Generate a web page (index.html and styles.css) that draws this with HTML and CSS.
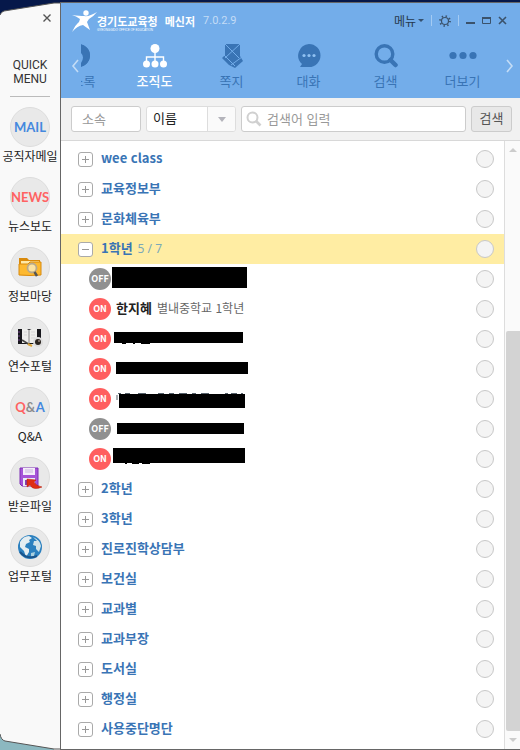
FILE: index.html
```
<!DOCTYPE html>
<html lang="ko">
<head>
<meta charset="utf-8">
<meta name="viewport" content="width=device-width, initial-scale=1">
<title>메신저</title>
<link rel="stylesheet" href="styles.css">
</head>
<body>
<div class="app">
  <aside class="side">
    <svg class="corner corner-top" width="60" height="15" aria-hidden="true"><path d="M0 0H60V1L54 1 4 9Q1 10 0 13Z" fill="#06184a"/><path d="M0 13Q1 10 4 9L54 1H60" fill="none" stroke="#555"/></svg>
    <svg class="corner corner-bottom" width="60" height="16" aria-hidden="true"><path d="M0 0Q1 6 5 7L54 15V16H0Z" fill="#8cb8c0"/><path d="M0 0Q1 6 5 7L54 15H60" fill="none" stroke="#555"/></svg>
    <button class="side-close" aria-label="닫기"><svg width="8" height="8"><path d="M0.500 0.500L7.500 7.500M7.500 0.500L0.500 7.500" stroke="#555" stroke-width="1.400"/></svg></button>
    <h2 class="quick">QUICK<br>MENU</h2>
    <nav class="links">
      <a href="#"><span class="disc mail">MAIL</span>공직자메일</a>
      <a href="#"><span class="disc news">NEWS</span>뉴스보도</a>
      <a href="#"><span class="disc"><svg width="24" height="22" viewBox="0 0 24 22"><path d="M1 2H9L11 4H22V19H1Z" fill="#d98a0c"/><path d="M3 5H21V10H3Z" fill="#ffe9a6"/><path d="M1 8H10L12 6H23V19Q12 20 1 19Z" fill="#fdb930" stroke="#d98a0c"/><circle cx="14" cy="12" r="4.500" fill="#fbe3a4" stroke="#b9a98b" stroke-width="1.800"/><path d="M16.500 16L19 20" stroke="#555" stroke-width="2.500"/></svg></span>정보마당</a>
      <a href="#"><span class="disc"><svg width="26" height="20" viewBox="0 0 26 20"><path d="M1 2H24V17H1Z" fill="#17171c"/><path d="M2 4V15" stroke="#70428a" stroke-dasharray="2 2"/><path d="M5 2Q9 1 12 3Q16 1 20 2V16H5Z" fill="#eeeeec"/><path d="M12 3V16" stroke="#888"/><path d="M7 5H10M7 8H10M14 5H18M14 8H18M14 11H18" stroke="#d7d7d7"/><path d="M5 13L13 18" stroke="#444" stroke-width="1.500"/><path d="M11 17L15 19" stroke="#dda63a" stroke-width="2"/><circle cx="21" cy="15" r="5" fill="#ddd"/><circle cx="21" cy="15" r="3" fill="#2b2520"/><circle cx="22" cy="14" r="1" fill="#9b8b80"/></svg></span>연수포털</a>
      <a href="#"><span class="disc qa"><span><b class="q">Q</b><b class="amp">&amp;</b><b class="a">A</b></span></span>Q&amp;A</a>
      <a href="#"><span class="disc"><svg width="24" height="24" viewBox="0 0 24 24"><path d="M2 3H20V21H4L2 19Z" fill="#a653d8" stroke="#7d2fb4"/><path d="M5 3H17V10H5Z" fill="#f4ecfa"/><path d="M7 5H15M7 7H15" stroke="#c9b6dc"/><path d="M5 13H17V21H5Z" fill="#e9eef8"/><path d="M7 15H10V20H7Z" fill="#8340b0"/><path d="M9 14L18 15 16 17Q18 21 24 22Q15 26 12 20L9 22Z" fill="#df2d14" stroke="#b91d0a" stroke-width=".5"/></svg></span>받은파일</a>
      <a href="#"><span class="disc"><svg width="26" height="26" viewBox="0 0 26 26"><circle cx="13" cy="13" r="12" fill="#2b80bf"/><path d="M3 8Q6 2 12 2L15 4 12 6 13 8 9 10 8 13 12 15 12 18 9 23 7 17 3 13Z" fill="#e4edf1"/><path d="M16 3Q23 6 24 12L22 18 19 15 19 12 16 11 17 7 20 7Z" fill="#d1e2e9"/><path d="M14 19L18 18 17 22 14 23Z" fill="#a9cfde"/><path d="M3 18Q10 26 20 22" fill="none" stroke="#1a548c" stroke-width="2"/></svg></span>업무포털</a>
    </nav>
  </aside>

  <main class="main">
    <header class="head">
      <div class="titlebar">
        <svg class="logo" width="25" height="22" viewBox="0 0 25 22" fill="#fff" aria-hidden="true"><circle cx="14" cy="3" r="2.700"/><path d="M0 5Q8 6 12 6Q17 7 25 2Q21 7 17 9L15 12 18 20 11 15Q5 16 0 22Q4 14 7 12L8 9Q4 6 0 5Z"/></svg>
        <h1 class="brand"><span class="org">경기도교육청<small>GYEONGGIDO OFFICE OF EDUCATION</small></span><span>메신저</span></h1>
        <span class="version">7.0.2.9</span>
        <div class="controls">
          <button class="menu">메뉴<svg width="6" height="4"><path d="M0 0H6L3 3Z" fill="#34506f"/></svg></button>
          <i class="bar"></i>
          <button aria-label="설정"><svg width="12" height="12" viewBox="0 0 12 12" fill="none" stroke="#3b526b"><circle cx="6" cy="6" r="3.500" stroke-width="1.200"/><circle cx="6" cy="6" r="5" stroke-width="1.800" stroke-dasharray="1.400 2.527"/></svg></button>
          <i class="bar"></i>
          <button class="win" aria-label="최소화"><svg width="9" height="9"><path d="M0 7H9" stroke="#3b526b" stroke-width="2"/></svg></button>
          <button class="win" aria-label="최대화"><svg width="9" height="9"><path d="M.5 1V7.500H8.500V1" fill="none" stroke="#3b526b"/><path d="M0 2H9" stroke="#3b526b" stroke-width="2"/></svg></button>
          <button class="win" aria-label="닫기"><svg width="9" height="9"><path d="M1 1L8 8M8 1L1 8" stroke="#3b526b" stroke-width="1.600"/></svg></button>
        </div>
      </div>
      <div class="tabs">
        <button class="arrow" aria-label="이전"><svg width="8" height="14"><path d="M7 1L2 7 7 13" fill="none" stroke="#c3dcf6" stroke-width="1.600"/></svg></button>
        <nav class="strip">
          <button><svg width="24" height="24" viewBox="0 0 24 24"><path fill="#3974b5" d="M12 0A12 11.500 0 0 1 12 23L15 19Q19 13 15 9V0Z"/><path fill="#3974b5" d="M14 .3Q24 3 24 12Q23 21 14 23L18 17V8Z"/></svg>주소록</button>
          <button class="on"><svg width="24" height="24" viewBox="0 0 24 24" fill="#fff"><circle cx="12" cy="4.500" r="4.500"/><circle cx="3.500" cy="20" r="3.500"/><circle cx="12" cy="20" r="3.500"/><circle cx="20.500" cy="20" r="3.500"/><path d="M12 8V17M3.500 17V13H20.500V17" fill="none" stroke="#fff" stroke-width="1.400"/></svg>조직도</button>
          <button><svg width="24" height="24" viewBox="0 0 24 24"><path d="M5 0H20V12L23 17 15 24 9 21 2 14 5 11Z" fill="#3974b5"/><path d="M5 0L19 14M20 0L5 14M4 11L15 22M11 21L22 13" fill="none" stroke="#73adea"/></svg>쪽지</button>
          <button><svg width="24" height="24" viewBox="0 0 24 24"><path fill="#3974b5" d="M12 0A11.500 11.500 0 1 1 12 23H3L5 20A11.500 11.500 0 0 1 12 0Z"/><g fill="#8fc0f2"><circle cx="7" cy="11.500" r="1.600"/><circle cx="12" cy="11.500" r="1.600"/><circle cx="17" cy="11.500" r="1.600"/></g></svg>대화</button>
          <button><svg width="24" height="24" viewBox="0 0 24 24" fill="none" stroke="#3974b5"><circle cx="10.500" cy="10" r="8.300" stroke-width="3.400"/><path d="M16.500 16L21.500 21" stroke-width="4.500" stroke-linecap="round"/></svg>검색</button>
          <button><svg width="28" height="24" viewBox="0 0 28 24" fill="#3974b5"><circle cx="4" cy="11.500" r="3.600"/><circle cx="14" cy="11.500" r="3.600"/><circle cx="24" cy="11.500" r="3.600"/></svg>더보기</button>
        </nav>
        <button class="arrow" aria-label="다음"><svg width="8" height="14"><path d="M1 1L6 7 1 13" fill="none" stroke="#c3dcf6" stroke-width="1.600"/></svg></button>
      </div>
    </header>

    <form class="search">
      <input class="dept" type="text" placeholder="소속" aria-label="소속">
      <span class="pick"><select aria-label="검색 기준"><option>이름</option></select><span class="drop"><svg width="8" height="5"><path d="M0 0H8L4 5Z" fill="#b4b4bb"/></svg></span></span>
      <label class="query"><svg width="16" height="16" viewBox="0 0 16 16" fill="none" stroke="#d0d0d0"><circle cx="6.500" cy="6.500" r="5" stroke-width="2"/><path d="M10 10L14.500 14.500" stroke-width="2.600"/></svg><input type="text" placeholder="검색어 입력" aria-label="검색어 입력"></label>
      <button type="button">검색</button>
    </form>

    <div class="body">
      <ul class="tree">
        <li class="row"><button class="fold" aria-label="펼치기"></button><span class="group">wee class</span><input type="checkbox" aria-label="wee class 선택"></li>
        <li class="row"><button class="fold" aria-label="펼치기"></button><span class="group">교육정보부</span><input type="checkbox" aria-label="교육정보부 선택"></li>
        <li class="row"><button class="fold" aria-label="펼치기"></button><span class="group">문화체육부</span><input type="checkbox" aria-label="문화체육부 선택"></li>
        <li class="row open"><button class="fold" aria-label="접기"></button><span class="group">1학년<small>5 / 7</small></span><input type="checkbox" aria-label="1학년 선택"></li>
        <li class="row member"><span class="status off">OFF</span><svg class="mask" width="140" height="30"><path d="M1 3h135v21h-135z"/></svg><input type="checkbox" aria-label="구성원 선택"></li>
        <li class="row member"><span class="status">ON</span><span class="name">한지혜</span><span class="school">별내중학교 1학년</span><input type="checkbox" aria-label="한지혜 선택"></li>
        <li class="row member"><span class="status">ON</span><svg class="mask" width="140" height="30"><path d="M3 8h129v11H3zM11 19h4v1h-4zM22 19h2v1h-2zM30 19h9v1h-9z"/></svg><input type="checkbox" aria-label="구성원 선택"></li>
        <li class="row member"><span class="status">ON</span><svg class="mask" width="140" height="30"><path d="M5 8h132v12H5z"/></svg><input type="checkbox" aria-label="구성원 선택"></li>
        <li class="row member"><span class="status">ON</span><svg class="mask" width="140" height="30"><path d="M8 10h126v14H8z"/><path d="M6 11v5M7 9.500h3M14 9.500h5M27 9.500h8M47 9.500h6M58 9.500h5M68 9.500h8M81 9.500h4M90 9.500h8M114 9.500h3M120 9.500h6M130 9.500h2" stroke="#56616b"/></svg><input type="checkbox" aria-label="구성원 선택"></li>
        <li class="row member"><span class="status off">OFF</span><svg class="mask" width="140" height="30"><path d="M6 9h127v11H6z"/></svg><input type="checkbox" aria-label="구성원 선택"></li>
        <li class="row member"><span class="status">ON</span><svg class="mask" width="140" height="30"><path d="M2 4h132v15H2zM14 19h2v1h-2zM21 19h7v1h-7zM31 19h8v1h-8z"/></svg><input type="checkbox" aria-label="구성원 선택"></li>
        <li class="row"><button class="fold" aria-label="펼치기"></button><span class="group">2학년</span><input type="checkbox" aria-label="2학년 선택"></li>
        <li class="row"><button class="fold" aria-label="펼치기"></button><span class="group">3학년</span><input type="checkbox" aria-label="3학년 선택"></li>
        <li class="row"><button class="fold" aria-label="펼치기"></button><span class="group">진로진학상담부</span><input type="checkbox" aria-label="진로진학상담부 선택"></li>
        <li class="row"><button class="fold" aria-label="펼치기"></button><span class="group">보건실</span><input type="checkbox" aria-label="보건실 선택"></li>
        <li class="row"><button class="fold" aria-label="펼치기"></button><span class="group">교과별</span><input type="checkbox" aria-label="교과별 선택"></li>
        <li class="row"><button class="fold" aria-label="펼치기"></button><span class="group">교과부장</span><input type="checkbox" aria-label="교과부장 선택"></li>
        <li class="row"><button class="fold" aria-label="펼치기"></button><span class="group">도서실</span><input type="checkbox" aria-label="도서실 선택"></li>
        <li class="row"><button class="fold" aria-label="펼치기"></button><span class="group">행정실</span><input type="checkbox" aria-label="행정실 선택"></li>
        <li class="row"><button class="fold" aria-label="펼치기"></button><span class="group">사용중단명단</span><input type="checkbox" aria-label="사용중단명단 선택"></li>
      </ul>
      <div class="scroll" aria-hidden="true">
        <svg width="8" height="4"><path d="M0 4H8L4 0Z" fill="#ccc"/></svg>
        <div class="track"><div class="thumb"></div></div>
        <svg width="8" height="4"><path d="M0 0H8L4 4Z" fill="#ccc"/></svg>
      </div>
    </div>
  </main>
</div>
</body>
</html>
```
FILE: styles.css
```
* { box-sizing: border-box; }
body {
  margin: 0;
  background: #06184a;
  font: 13px/18px "Noto Sans CJK KR", sans-serif;
  color: #333;
}
button {
  margin: 0;
  padding: 0;
  border: 0;
  background: none;
  font: inherit;
  color: inherit;
}
svg { display: block; flex: none; }
.app { display: flex; min-height: 100vh; padding-top: 2px; }

.side {
  position: relative;
  display: flex;
  flex-direction: column;
  align-items: center;
  flex: 0 0 60px;
  background: #f9f9f9;
}
.corner { position: absolute; left: 0; }
.corner-top { top: 0; }
.corner-bottom { bottom: 0; }
.side-close { position: relative; align-self: flex-end; margin: 12px 9px 0 0; }
.quick {
  width: 40px;
  margin: 36px 0 10px;
  padding-bottom: 10px;
  border-bottom: 1px solid #bbb;
  font: 12px/14px Roboto, sans-serif;
  text-align: center;
}
.links { display: flex; flex-direction: column; gap: 12px; }
.links a {
  display: flex;
  flex-direction: column;
  align-items: center;
  font-size: 12px;
  color: #222;
  text-decoration: none;
  white-space: nowrap;
}
.disc {
  display: flex;
  align-items: center;
  justify-content: center;
  width: 40px;
  height: 40px;
  border: 1px solid #ddd;
  border-radius: 50%;
  background: #e9e9e9;
  font: 700 13px/20px Lato, sans-serif;
}
.mail { color: #4488de; }
.news { color: #ff6262; }
.qa b { font-weight: 700; }
.q { color: #ff6262; }
.amp { color: #8c8c8c; }
.a { color: #4488de; }

.main {
  display: flex;
  flex-direction: column;
  flex: 1;
  min-width: 0;
  border: solid #666;
  border-width: 1px 0 1px 1px;
  background: #fff;
}
.head { background: #73adea; }
.titlebar { display: flex; align-items: center; height: 35px; padding: 0 13px 0 11px; }
.brand {
  display: flex;
  gap: 7px;
  margin: 0;
  font-size: 11px;
  font-weight: 700;
  line-height: 14px;
  color: #fff;
  white-space: nowrap;
}
.org { position: relative; }
.brand small {
  position: absolute;
  top: 14px;
  left: 0;
  font: 3px/4px "Liberation Sans", sans-serif;
}
.version { margin-left: 8px; font: 11px/14px Roboto, sans-serif; color: #c3dcf6; }
.controls { display: flex; align-items: center; gap: 7px; margin-left: auto; color: #26384c; }
.menu { display: flex; align-items: center; gap: 2px; font-size: 12px; }
.bar { width: 1px; height: 11px; background: #a4cbf3; }
.win { width: 9px; }
.tabs { display: flex; height: 60px; }
.arrow { display: flex; justify-content: center; flex: 0 0 20px; padding-top: 21px; }
.arrow:first-child { padding-left: 8px; }
.strip { display: flex; flex: 1; overflow: hidden; }
.strip button {
  display: flex;
  flex-direction: column;
  align-items: center;
  flex: 0 0 77px;
  gap: 4px;
  padding-top: 6px;
  color: #3974b5;
}
.strip button:first-child { margin-left: -42px; }
.strip .on { font-weight: 500; color: #fff; }

.search {
  display: flex;
  gap: 5px;
  padding: 8px 8px 8px 10px;
  border-bottom: 1px solid #d8d8d8;
  background: #f1f1f1;
}
.search > * { height: 26px; border: 1px solid #ccc; border-radius: 3px; background: #fff; }
.search input, .search select { font: 13px/18px "Noto Sans CJK KR", sans-serif; outline: 0; }
.search ::placeholder { color: #999; opacity: 1; }
.dept { width: 70px; padding: 0 10px 2px; }
.pick { display: flex; width: 90px; overflow: hidden; }
.search .pick { border-color: #ddd; }
.pick select { flex: 1; min-width: 0; padding: 0 6px 2px; border: 0; background: none; color: #222; appearance: none; }
.drop { display: flex; align-items: center; justify-content: center; width: 28px; border-left: 1px solid #ddd; background: #fafafa; }
.query { display: flex; align-items: center; flex: 1; gap: 5px; min-width: 0; padding: 0 4px; }
.query input { flex: 1; min-width: 0; height: 24px; padding: 0 0 2px; border: 0; background: none; }
.search button { width: 41px; padding-bottom: 2px; background: #e8e8e8; color: #555; }

.body { display: flex; flex: 1; }
.tree { flex: 1; min-width: 0; margin: 0; padding: 3px 0 0; list-style: none; }
.row { display: flex; align-items: center; height: 30px; padding: 0 10px 0 17px; }
.open { background: #ffeda3; }
.member { padding-left: 28px; }
.fold {
  width: 15px;
  height: 15px;
  margin-right: 8px;
  border: 1px solid #aaa;
  border-radius: 3px;
  background:
    linear-gradient(#999, #999) center / 7px 1px no-repeat,
    linear-gradient(#999, #999) center / 1px 7px no-repeat,
    #fff;
}
.open .fold { background: linear-gradient(#999, #999) center / 7px 1px no-repeat, #fff; }
.group { padding-bottom: 2px; font-weight: 700; color: #3974b5; }
.group small { margin-left: 5px; font: 12px/18px "Noto Sans", sans-serif; color: #7aa9b9; }
.row input {
  width: 18px;
  height: 18px;
  margin: 0 0 0 auto;
  border: 1px solid #c8c8c8;
  border-radius: 50%;
  background: #f4f4f4;
  appearance: none;
}
.status {
  width: 22px;
  height: 22px;
  border-radius: 50%;
  background: #ff5f5f;
  color: #fff;
  font: 700 9px/22px "Noto Sans CJK KR", sans-serif;
  text-align: center;
}
.off { background: #909090; }
.name, .school { padding-bottom: 2px; }
.name { margin: 0 5px; font-weight: 700; color: #222; }
.school { font-size: 12px; color: #666; }

.scroll {
  display: flex;
  flex-direction: column;
  align-items: center;
  flex: 0 0 16px;
  gap: 7px;
  padding: 7px 0;
  border-left: 1px solid #ddd;
  background: #fafafa;
}
.track { display: flex; flex-direction: column; justify-content: flex-end; flex: 1; width: 100%; padding-left: 1px; }
.thumb { height: 70%; border-radius: 2px 0 0 2px; background: #d3d3d3; }
```
